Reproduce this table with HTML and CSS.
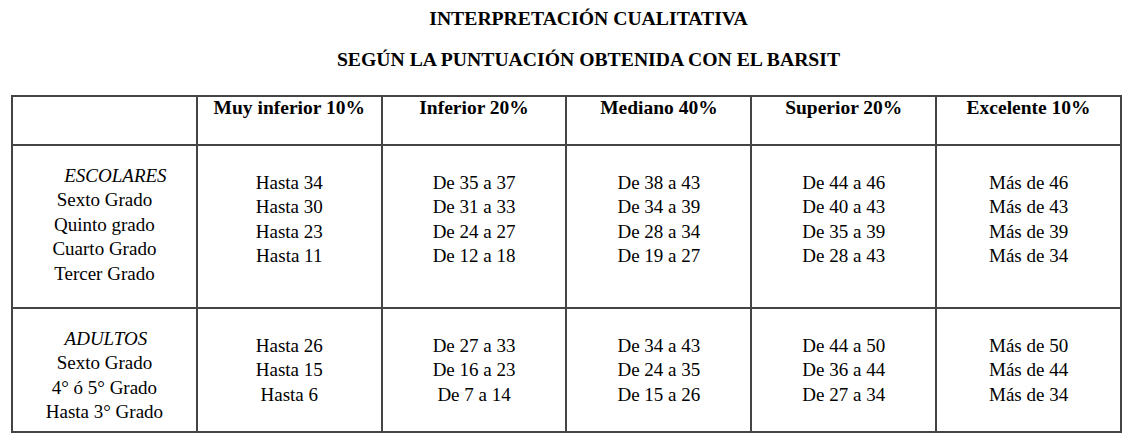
FILE: index.html
```html
<!DOCTYPE html>
<html lang="es">
<head>
<meta charset="utf-8">
<title>Interpretación cualitativa BARSIT</title>
<link rel="stylesheet" href="styles.css">
</head>
<body>
<div class="page">
  <header class="titles">
    <h1 class="title">INTERPRETACIÓN CUALITATIVA</h1>
    <h2 class="title title-sub">SEGÚN LA PUNTUACIÓN OBTENIDA CON EL BARSIT</h2>
  </header>
  <table class="scores">
    <thead>
      <tr class="head-row">
        <th></th>
        <th>Muy inferior 10%</th>
        <th>Inferior 20%</th>
        <th>Mediano 40%</th>
        <th>Superior 20%</th>
        <th>Excelente 10%</th>
      </tr>
    </thead>
    <tbody>
      <tr class="row-school">
        <td class="group">
          <em class="group-name group-name-school">ESCOLARES</em>
          <span class="line">Sexto Grado</span>
          <span class="line">Quinto grado</span>
          <span class="line">Cuarto Grado</span>
          <span class="line">Tercer Grado</span>
        </td>
        <td class="data">
          <span class="line">Hasta 34</span>
          <span class="line">Hasta 30</span>
          <span class="line">Hasta 23</span>
          <span class="line">Hasta 11</span>
        </td>
        <td class="data">
          <span class="line">De 35 a 37</span>
          <span class="line">De 31 a 33</span>
          <span class="line">De 24 a 27</span>
          <span class="line">De 12 a 18</span>
        </td>
        <td class="data">
          <span class="line">De 38 a 43</span>
          <span class="line">De 34 a 39</span>
          <span class="line">De 28 a 34</span>
          <span class="line">De 19 a 27</span>
        </td>
        <td class="data">
          <span class="line">De 44 a 46</span>
          <span class="line">De 40 a 43</span>
          <span class="line">De 35 a 39</span>
          <span class="line">De 28 a 43</span>
        </td>
        <td class="data">
          <span class="line">Más de 46</span>
          <span class="line">Más de 43</span>
          <span class="line">Más de 39</span>
          <span class="line">Más de 34</span>
        </td>
      </tr>
      <tr class="row-adult">
        <td class="group">
          <em class="group-name group-name-adult">ADULTOS</em>
          <span class="line">Sexto Grado</span>
          <span class="line">4° ó 5° Grado</span>
          <span class="line">Hasta 3° Grado</span>
        </td>
        <td class="data">
          <span class="line">Hasta 26</span>
          <span class="line">Hasta 15</span>
          <span class="line">Hasta 6</span>
        </td>
        <td class="data">
          <span class="line">De 27 a 33</span>
          <span class="line">De 16 a 23</span>
          <span class="line">De 7 a 14</span>
        </td>
        <td class="data">
          <span class="line">De 34 a 43</span>
          <span class="line">De 24 a 35</span>
          <span class="line">De 15 a 26</span>
        </td>
        <td class="data">
          <span class="line">De 44 a 50</span>
          <span class="line">De 36 a 44</span>
          <span class="line">De 27 a 34</span>
        </td>
        <td class="data">
          <span class="line">Más de 50</span>
          <span class="line">Más de 44</span>
          <span class="line">Más de 34</span>
        </td>
      </tr>
    </tbody>
  </table>
</div>
</body>
</html>
```

FILE: styles.css
```css
html, body {
  margin: 0;
  padding: 0;
  background: #ffffff;
}

body {
  font-family: "Liberation Serif", "Times New Roman", serif;
  color: #000000;
  font-size: 19px;
}

.page {
  width: 1131px;
  height: 443px;
  overflow: hidden;
}

.titles {
  padding: 6px 0 0 46px;
  text-align: center;
}

.title {
  margin: 0;
  font-size: 19.7px;
  font-weight: bold;
  line-height: 24px;
}

.title-sub {
  margin-top: 17px;
}

.scores {
  margin: 24px 0 0 11px;
  width: 1111px;
  table-layout: fixed;
  border-collapse: separate;
  border-spacing: 0;
  border-top: 2px solid #444444;
  border-left: 2px solid #444444;
}

.scores th,
.scores td {
  border-right: 2px solid #444444;
  border-bottom: 2px solid #444444;
  text-align: center;
  vertical-align: top;
  padding: 0;
}

.scores th {
  font-size: 19.5px;
  font-weight: bold;
  line-height: 19px;
  padding-top: 1px;
}

.head-row {
  height: 49px;
}

.row-school {
  height: 163px;
}

.row-adult {
  height: 124px;
}

.scores td {
  line-height: 24.4px;
}

.group {
  padding-top: 18px !important;
}

.data {
  padding-top: 25px !important;
}

.line,
.group-name {
  display: block;
  white-space: nowrap;
}

.group-name {
  font-style: italic;
}

.group-name-school {
  padding-left: 22px;
}

.group-name-adult {
  padding-left: 3px;
}
```
